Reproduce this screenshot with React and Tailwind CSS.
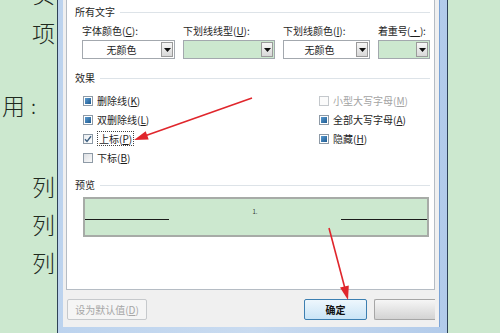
import React from 'react';

const CJK = '"Noto Sans CJK SC", "Noto Sans", sans-serif';

const Key = ({ text, k, tail = ')' }) => (
  <span className="whitespace-nowrap">
    {text}(<span className="underline underline-offset-1">{k}</span>{tail}
  </span>
);

const Caret = () => (
  <svg width="7" height="4" viewBox="0 0 7 4">
    <path d="M0 0h7L3.5 4z" fill="#111" />
  </svg>
);

const Dropdown = ({ className, value, disabled }) => (
  <div className={`flex h-[19px] border border-[#a3a8ae] ${disabled ? 'bg-[#cce8cf]' : 'bg-white'} ${className}`}>
    <div className="flex flex-1 items-center justify-center text-[10px] text-[#222]">{value}</div>
    <div className="m-[1px] flex w-[12px] items-center justify-center border border-[#9a9a9a] bg-gradient-to-b from-[#f7f7f7] to-[#d8d8d8]">
      <Caret />
    </div>
  </div>
);

const Box = ({ kind }) => {
  if (kind === 'fill') {
    return (
      <div className="h-[10px] w-[10px] border border-[#8e9aa6] bg-white p-[1px]">
        <div className="h-full w-full bg-gradient-to-br from-[#5b9bd0] to-[#1d5b91]" />
      </div>
    );
  }
  if (kind === 'check') {
    return (
      <div className="flex h-[10px] w-[10px] items-center justify-center border border-[#8e9aa6] bg-gradient-to-br from-[#e9edf1] to-[#ffffff]">
        <svg width="8" height="8" viewBox="0 0 8 8">
          <path d="M1 4.2 3 6.4 7 1.2" fill="none" stroke="#3d5f80" strokeWidth="1.4" />
        </svg>
      </div>
    );
  }
  if (kind === 'off') {
    return <div className="h-[10px] w-[10px] border border-[#c4c8cc] bg-[#fbfbfb]" />;
  }
  return <div className="h-[10px] w-[10px] border border-[#8e9aa6] bg-gradient-to-br from-[#dcdfe3] to-[#fafafa]" />;
};

const Row = ({ kind, children, muted, focus }) => (
  <div className="flex h-[19px] items-center gap-[4px]">
    <Box kind={kind} />
    <span
      className={`text-[10px] leading-[13px] ${muted ? 'text-[#a3a3a3]' : 'text-[#1e1e1e]'} ${
        focus ? 'border border-dotted border-[#444] px-[1px]' : ''
      }`}
    >
      {children}
    </span>
  </div>
);

const Heading = ({ children }) => (
  <div className="flex h-[12px] items-center gap-[5px]">
    <span className="text-[10px] leading-none text-[#1e1e1e]">{children}</span>
    <div className="h-px flex-1 bg-[#dde3e8]" />
  </div>
);

export default function App() {
  return (
    <div className="relative flex h-[333px] w-[500px] overflow-hidden bg-[#cce8cf]" style={{ fontFamily: CJK }}>
      {/* text of the page behind the dialog */}
      <div className="flex w-[57px] shrink-0 flex-col text-[23px] font-light leading-none text-[#1f2a1f]">
        <div className="mt-[-18px] h-[23px] pr-[2px] text-right">实</div>
        <div className="mt-[16px] h-[23px] pr-[2px] text-right">项</div>
        <div className="mt-[50px] flex h-[23px] items-center pl-[2px]">
          <span>用</span>
          <span className="ml-[6px] text-[20px]">:</span>
        </div>
        <div className="mt-[58px] h-[23px] pr-[2px] text-right">列</div>
        <div className="mt-[15px] h-[23px] pr-[2px] text-right">列</div>
        <div className="mt-[15px] h-[23px] pr-[2px] text-right">列</div>
      </div>

      {/* dialog */}
      <div className="flex w-[391px] shrink-0 flex-col border-x border-x-[#2f4257] bg-gradient-to-r from-[#bcd3ee] via-[#c9dbf0] to-[#b2cbea] pb-[6px] pl-[5px] pr-[7px]">
        <div className="flex flex-1 flex-col border-r border-r-[#7aa3d6] bg-[#f0f0f0] pl-[3px] pr-[4px]">
          <div className="flex h-[290px] flex-col border-x border-b border-[#b5bcc4] bg-white pl-[8px] pr-[4px]">
            <div className="mt-[6px]">
              <Heading>所有文字</Heading>
            </div>

            <div className="ml-[7px] mt-[7px] flex h-[12px] items-center gap-[8px] text-[10px] leading-none text-[#1e1e1e]">
              <div className="w-[93px]">
                <Key text="字体颜色" k="C" tail="):" />
              </div>
              <div className="w-[92px]">
                <Key text="下划线线型" k="U" tail="):" />
              </div>
              <div className="w-[87px]">
                <Key text="下划线颜色" k="I" tail="):" />
              </div>
              <div className="w-[52px] tracking-[-0.3px]">
                <Key text="着重号" k="·" tail="):" />
              </div>
            </div>

            <div className="ml-[7px] mt-[3px] flex gap-[8px]">
              <Dropdown className="w-[93px]" value="无颜色" />
              <Dropdown className="w-[92px]" value="" disabled />
              <Dropdown className="w-[87px]" value="无颜色" />
              <Dropdown className="w-[52px]" value="" disabled />
            </div>

            <div className="mt-[13px]">
              <Heading>效果</Heading>
            </div>

            <div className="ml-[8px] mt-[7px] flex">
              <div className="flex w-[236px] flex-col">
                <Row kind="fill">
                  <Key text="删除线" k="K" />
                </Row>
                <Row kind="fill">
                  <Key text="双删除线" k="L" />
                </Row>
                <Row kind="check" focus>
                  <Key text="上标" k="P" />
                </Row>
                <Row kind="empty">
                  <Key text="下标" k="B" />
                </Row>
              </div>
              <div className="flex flex-col">
                <Row kind="off" muted>
                  <Key text="小型大写字母" k="M" />
                </Row>
                <Row kind="fill">
                  <Key text="全部大写字母" k="A" />
                </Row>
                <Row kind="fill">
                  <Key text="隐藏" k="H" />
                </Row>
              </div>
            </div>

            <div className="mt-[12px]">
              <Heading>预览</Heading>
            </div>

            <div className="ml-[8px] mt-[6px] flex h-[40px] w-[346px] items-start border-2 border-[#a7aba7] bg-[#cce8cf]">
              <div className="mt-[20px] h-px w-[84px] bg-[#1b1b1b]" />
              <div className="mt-[10px] flex-1 text-center text-[6px] leading-none text-[#333]">1.</div>
              <div className="mt-[20px] h-px w-[86px] bg-[#1b1b1b]" />
            </div>
          </div>

          <div className="flex h-[37px] items-start pt-[9px]">
            <div className="ml-[1px] flex h-[21px] w-[80px] items-center justify-center rounded-[2px] border border-[#c6c9cc] bg-[#f5f5f5] text-[10px] text-[#a6a6a6]">
              <Key text="设为默认值" k="D" />
            </div>
            <div className="ml-auto flex h-[21px] w-[63px] items-center justify-center rounded-[2px] border border-[#3c7fb1] bg-gradient-to-b from-[#eef7fd] to-[#c9e4f6] text-[10px] font-bold text-[#111]">
              确定
            </div>
            <div className="ml-[7px] h-[21px] w-[61px] rounded-l-[2px] border border-r-0 border-[#a6a6a6] bg-gradient-to-b from-[#f6f6f6] to-[#d3d3d3]" />
          </div>
        </div>
      </div>

      {/* annotation arrows */}
      <svg className="pointer-events-none absolute left-0 top-0" width="500" height="333" viewBox="0 0 500 333">
        <line x1="252" y1="98" x2="146" y2="135.6" stroke="#e0262c" strokeWidth="1.6" />
        <polygon points="134,140 148.7,139.6 145.7,131.2" fill="#e0262c" />
        <line x1="329" y1="228" x2="344.6" y2="287" stroke="#e0262c" strokeWidth="1.6" />
        <polygon points="348,300 348.8,285.4 340,287.6" fill="#e0262c" />
      </svg>
    </div>
  );
}
